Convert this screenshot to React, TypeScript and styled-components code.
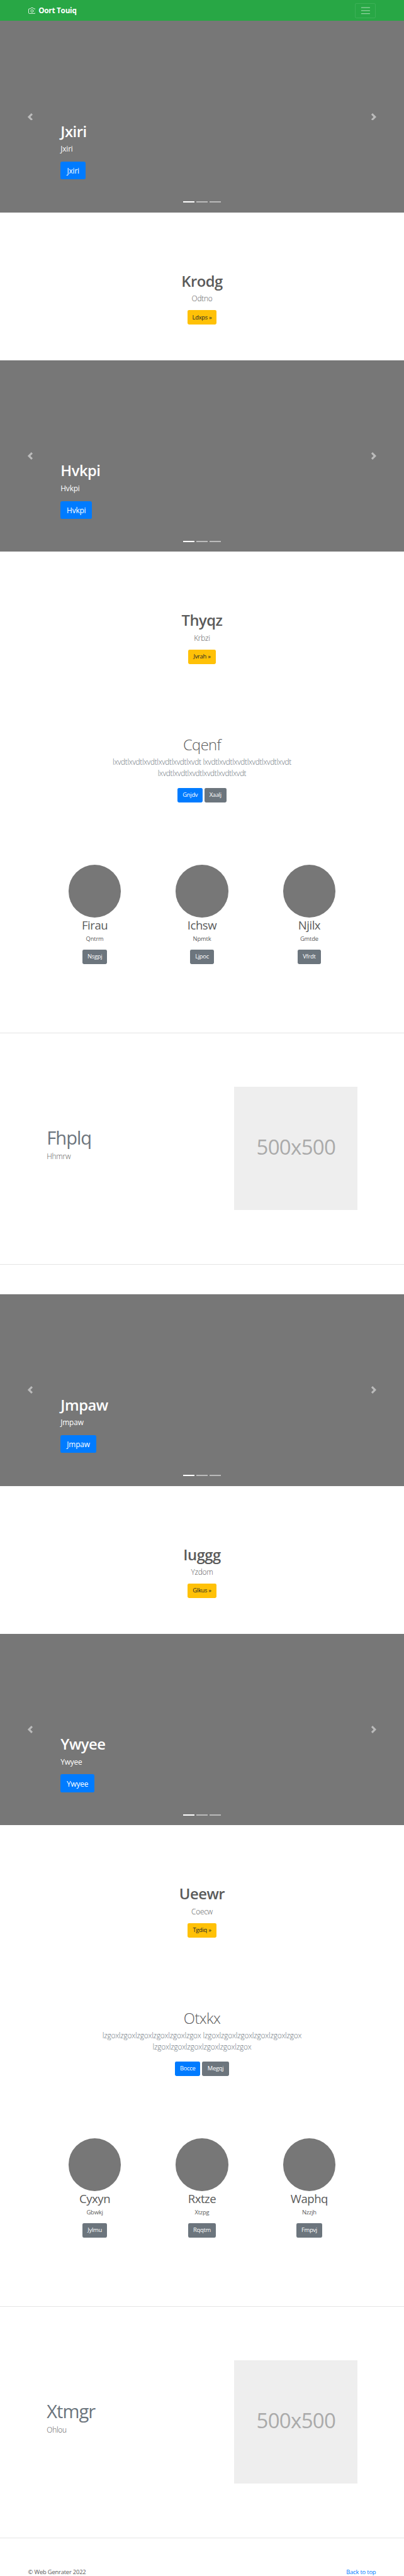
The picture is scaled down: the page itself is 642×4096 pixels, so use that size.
import React from "react";
import styled, { createGlobalStyle, css } from "styled-components";

/* The root font size carries the page scale: 67.5rem is the full page width. */
const r = (n: number) => `${n / 16}rem`;

const Global = createGlobalStyle`
  *, *::before, *::after { box-sizing: border-box; }
  html { font-size: calc(100vw / 67.5); background: #fff; }
  body {
    margin: 0;
    font-family: "Open Sans", "Noto Sans", sans-serif;
    font-size: 1rem;
    line-height: 1.5rem;
    color: #5a5a5a;
  }
  h1, h2, p { margin: 0; }
  a { text-decoration: none; }
`;

const Navbar = styled.header`
  display: flex;
  align-items: center;
  justify-content: space-between;
  height: ${r(56)};
  padding: 0 ${r(75)};
  background: #28a745;
`;

const Brand = styled.a`
  display: flex;
  align-items: center;
  gap: ${r(8)};
  color: #fff;
  font-size: ${r(19.8)};
  font-weight: 700;
  line-height: ${r(30)};
  letter-spacing: -0.022em;

  svg {
    width: ${r(20)};
    height: ${r(20)};
  }
`;

const Toggler = styled.button`
  display: flex;
  align-items: center;
  justify-content: center;
  width: ${r(56)};
  height: ${r(40)};
  padding: 0;
  background: transparent;
  border: 1px solid rgba(255, 255, 255, 0.1);
  border-radius: ${r(4)};

  svg {
    width: ${r(30)};
    height: ${r(30)};
  }
`;

const Hero = styled.section`
  position: relative;
  display: flex;
  flex-direction: column;
  align-items: flex-start;
  height: ${r(512)};
  padding: ${r(271.5)} 15% 0;
  background: #777;
  color: #fff;
`;

const Title = styled.h1<{ $light?: boolean }>`
  font-size: ${r(40)};
  line-height: ${r(50)};
  font-weight: ${(p) => (p.$light ? 300 : 600)};
  letter-spacing: ${(p) => (p.$light ? "-0.025em" : "-0.02em")};
  margin-bottom: ${r(6)};
`;

const HeroText = styled.p`
  font-size: ${r(20)};
  line-height: ${r(30)};
  letter-spacing: -0.015em;
  margin-bottom: ${r(18.5)};
`;

const Arrow = styled.button<{ $side: "left" | "right" }>`
  position: absolute;
  top: 0;
  bottom: 0;
  ${(p) => p.$side}: 0;
  display: flex;
  align-items: center;
  justify-content: center;
  width: 15%;
  padding: 0;
  border: 0;
  background: none;
  opacity: 0.5;

  svg {
    width: ${r(20)};
    height: ${r(20)};
  }
`;

const Indicators = styled.div`
  position: absolute;
  left: 0;
  right: 0;
  bottom: ${r(26)};
  display: flex;
  justify-content: center;
  gap: ${r(6)};
`;

const Dash = styled.span<{ $active?: boolean }>`
  width: ${r(30)};
  height: ${r(3)};
  background: #fff;
  opacity: ${(p) => (p.$active ? 1 : 0.5)};
`;

const tones = {
  primary: { bg: "#007bff", fg: "#fff" },
  secondary: { bg: "#6c757d", fg: "#fff" },
  warning: { bg: "#ffc107", fg: "#212529" },
};

const Button = styled.a<{ $tone: keyof typeof tones; $large?: boolean; $width: number }>`
  display: flex;
  align-items: center;
  justify-content: center;
  width: ${(p) => r(p.$width)};
  white-space: nowrap;
  background: ${(p) => tones[p.$tone].bg};
  color: ${(p) => tones[p.$tone].fg};
  ${(p) =>
    p.$large
      ? css`
          height: ${r(48)};
          border-radius: ${r(4.8)};
          font-size: ${r(20)};
          letter-spacing: -0.015em;
        `
      : css`
          height: ${r(38)};
          border-radius: ${r(4)};
          font-size: ${r(15.8)};
          letter-spacing: -0.03em;
        `}
`;

const Promo = styled.section`
  display: flex;
  flex-direction: column;
  align-items: center;
  height: ${r(396)};
  padding-top: ${r(160)};
`;

const Lead = styled.p`
  font-size: ${r(20)};
  line-height: ${r(30)};
  font-weight: 300;
  letter-spacing: -0.02em;
  text-align: center;
  color: #5a5a5a;
  margin-bottom: ${r(16)};
`;

const Intro = styled.section`
  display: flex;
  flex-direction: column;
  align-items: center;
  height: ${r(442)};
  padding-top: ${r(96)};
`;

const IntroText = styled(Lead)<{ $tracking: number }>`
  color: #6c757d;
  letter-spacing: ${(p) => p.$tracking}em;
  margin-bottom: ${r(24)};
`;

const ButtonPair = styled.div`
  display: flex;
  gap: ${r(4.4)};
`;

const Team = styled.section`
  display: grid;
  grid-template-columns: repeat(3, 1fr);
  height: ${r(448.4)};
  padding: 0 ${r(110)};
`;

const Member = styled.article`
  display: flex;
  flex-direction: column;
  align-items: center;

  h2 {
    font-size: ${r(31.2)};
    line-height: ${r(40)};
    font-weight: 400;
    letter-spacing: -0.025em;
    margin-bottom: ${r(6.4)};
  }

  p {
    font-size: ${r(15.8)};
    letter-spacing: -0.02em;
    margin-bottom: ${r(16)};
  }
`;

const Avatar = styled.div`
  width: ${r(140)};
  height: ${r(140)};
  border-radius: 50%;
  background: #777;
`;

const Feature = styled.section`
  display: flex;
  align-items: center;
  justify-content: space-between;
  height: ${r(620.2)};
  padding: 0 ${r(124)} 0 ${r(125)};
  border-top: 1px solid rgba(0, 0, 0, 0.1);
  border-bottom: 1px solid rgba(0, 0, 0, 0.1);
`;

const FeatureTitle = styled.h2`
  font-size: ${r(49)};
  line-height: ${r(60)};
  font-weight: 400;
  letter-spacing: -0.035em;
  color: #6c757d;
`;

const FeatureText = styled(Lead)`
  text-align: left;
  margin-top: ${r(3.5)};
  margin-bottom: ${r(21)};
`;

const Placeholder = styled.div`
  display: flex;
  align-items: center;
  justify-content: center;
  width: ${r(329.5)};
  height: ${r(329.5)};
  padding-bottom: ${r(8)};
  background: #eee;
  color: #aaa;
  font-size: ${r(55.5)};
  letter-spacing: -0.02em;
`;

const Spacer = styled.div`
  height: ${r(80)};
`;

const Footer = styled.footer`
  display: flex;
  justify-content: space-between;
  padding: ${r(79.5)} ${r(75)} 0;
  font-size: ${r(15.8)};
  letter-spacing: -0.02em;

  a {
    color: #007bff;
  }
`;

function Carousel({ text, width }: { text: string; width: number }) {
  return (
    <Hero>
      <Title>{text}</Title>
      <HeroText>{text}</HeroText>
      <Button $tone="primary" $large $width={width}>
        {text}
      </Button>
      <Arrow $side="left" aria-label="Previous">
        <svg viewBox="0 0 8 8" fill="#fff">
          <path d="M5.25 0l-4 4 4 4 1.5-1.5L4.25 4l2.5-2.5L5.25 0z" />
        </svg>
      </Arrow>
      <Arrow $side="right" aria-label="Next">
        <svg viewBox="0 0 8 8" fill="#fff">
          <path d="M2.75 0l-1.5 1.5L3.75 4l-2.5 2.5L2.75 8l4-4-4-4z" />
        </svg>
      </Arrow>
      <Indicators>
        <Dash $active />
        <Dash />
        <Dash />
      </Indicators>
    </Hero>
  );
}

function Callout({ title, text, action, width }: { title: string; text: string; action: string; width: number }) {
  return (
    <Promo>
      <Title>{title}</Title>
      <Lead>{text}</Lead>
      <Button $tone="warning" $width={width}>
        {action} »
      </Button>
    </Promo>
  );
}

type Action = [label: string, width: number];

function IntroBlock({
  title,
  word,
  tracking,
  actions,
}: {
  title: string;
  word: string;
  tracking: number;
  actions: [Action, Action];
}) {
  const run = word.repeat(6);
  return (
    <Intro>
      <Title $light>{title}</Title>
      <IntroText $tracking={tracking}>
        {run} {run}
        <br />
        {run}
      </IntroText>
      <ButtonPair>
        <Button $tone="primary" $width={actions[0][1]}>
          {actions[0][0]}
        </Button>
        <Button $tone="secondary" $width={actions[1][1]}>
          {actions[1][0]}
        </Button>
      </ButtonPair>
    </Intro>
  );
}

type Person = { name: string; role: string; action: string; width: number };

function People({ people }: { people: Person[] }) {
  return (
    <Team>
      {people.map((p) => (
        <Member key={p.name}>
          <Avatar />
          <h2>{p.name}</h2>
          <p>{p.role}</p>
          <Button $tone="secondary" $width={p.width}>
            {p.action}
          </Button>
        </Member>
      ))}
    </Team>
  );
}

function FeatureRow({ title, text }: { title: string; text: string }) {
  return (
    <Feature>
      <div>
        <FeatureTitle>{title}</FeatureTitle>
        <FeatureText>{text}</FeatureText>
      </div>
      <Placeholder>500x500</Placeholder>
    </Feature>
  );
}

export default function App() {
  return (
    <>
      <Global />
      <Navbar>
        <Brand>
          <svg viewBox="0 0 24 24" fill="none" stroke="#fff" strokeWidth="1.7" strokeLinecap="round" strokeLinejoin="round">
            <path d="M23 19a2 2 0 0 1-2 2H3a2 2 0 0 1-2-2V8a2 2 0 0 1 2-2h4l2-3h6l2 3h4a2 2 0 0 1 2 2z" />
            <circle cx="12" cy="13" r="4" />
          </svg>
          <span>Oort Touiq</span>
        </Brand>
        <Toggler aria-label="Menu">
          <svg viewBox="0 0 30 30" stroke="rgba(255,255,255,0.5)" strokeWidth="2" strokeLinecap="round">
            <path d="M4 7h22M4 15h22M4 23h22" />
          </svg>
        </Toggler>
      </Navbar>
      <main>
        <Carousel text="Jxiri" width={67} />
        <Callout title="Krodg" text="Odtno" action="Ldxps" width={78.5} />
        <Carousel text="Hvkpi" width={84} />
        <Callout title="Thyqz" text="Krbzi" action="Jvrah" width={74.5} />
        <IntroBlock title="Cqenf" word="lxvdt" tracking={-0.028} actions={[["Gnjdv", 67], ["Xaalj", 58.5]]} />
        <People
          people={[
            { name: "Firau", role: "Qntrm", action: "Nsgpj", width: 67 },
            { name: "Ichsw", role: "Npmtk", action: "Ljpoc", width: 63.5 },
            { name: "Njilx", role: "Gmtde", action: "Vfrdt", width: 61.5 },
          ]}
        />
        <FeatureRow title="Fhplq" text="Hhmrw" />
        <Spacer />
        <Carousel text="Jmpaw" width={95} />
        <Callout title="Iuggg" text="Yzdom" action="Glkus" width={78.5} />
        <Carousel text="Ywyee" width={90} />
        <Callout title="Ueewr" text="Coecw" action="Tgdiq" width={78.5} />
        <IntroBlock title="Otxkx" word="lzgox" tracking={-0.018} actions={[["Bocce", 68], ["Megqj", 72.5]]} />
        <People
          people={[
            { name: "Cyxyn", role: "Gbwkj", action: "Jylmu", width: 66 },
            { name: "Rxtze", role: "Xtzpg", action: "Rqqtm", width: 74.5 },
            { name: "Waphq", role: "Nzzjh", action: "Fmpvj", width: 69 },
          ]}
        />
        <FeatureRow title="Xtmgr" text="Ohlou" />
      </main>
      <Footer>
        <span>© Web Genrater 2022</span>
        <a>Back to top</a>
      </Footer>
    </>
  );
}
